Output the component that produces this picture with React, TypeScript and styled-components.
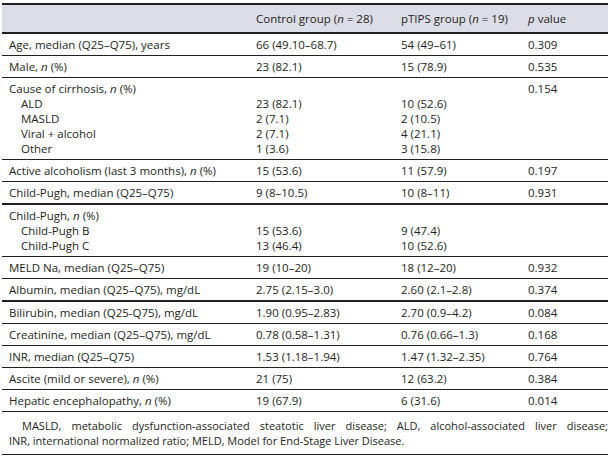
import React, { FC, ReactNode } from "react";
import styled, { createGlobalStyle } from "styled-components";

const GlobalStyle = createGlobalStyle`
  body {
    margin: 0;
    background: #ffffff;
    color: #231f20;
    font-family: "Open Sans", "Liberation Sans", sans-serif;
  }
`;

type Line = [ReactNode, string, string];

type Row = {
  label: ReactNode;
  control: string;
  ptips: string;
  p: string;
  sub?: Line[];
  thick?: boolean;
};

const N = () => <I>n</I>;

const rows: Row[] = [
  { label: "Age, median (Q25–Q75), years", control: "66 (49.10–68.7)", ptips: "54 (49–61)", p: "0.309" },
  { label: <>Male, <N /> (%)</>, control: "23 (82.1)", ptips: "15 (78.9)", p: "0.535" },
  {
    label: <>Cause of cirrhosis, <N /> (%)</>,
    control: "",
    ptips: "",
    p: "0.154",
    sub: [
      ["ALD", "23 (82.1)", "10 (52.6)"],
      ["MASLD", "2 (7.1)", "2 (10.5)"],
      ["Viral + alcohol", "2 (7.1)", "4 (21.1)"],
      ["Other", "1 (3.6)", "3 (15.8)"],
    ],
  },
  { label: <>Active alcoholism (last 3 months), <N /> (%)</>, control: "15 (53.6)", ptips: "11 (57.9)", p: "0.197" },
  { label: "Child-Pugh, median (Q25–Q75)", control: "9 (8–10.5)", ptips: "10 (8–11)", p: "0.931", thick: true },
  {
    label: <>Child-Pugh, <N /> (%)</>,
    control: "",
    ptips: "",
    p: "",
    sub: [
      ["Child-Pugh B", "15 (53.6)", "9 (47.4)"],
      ["Child-Pugh C", "13 (46.4)", "10 (52.6)"],
    ],
  },
  { label: "MELD Na, median (Q25–Q75)", control: "19 (10–20)", ptips: "18 (12–20)", p: "0.932" },
  { label: "Albumin, median (Q25–Q75), mg/dL", control: "2.75 (2.15–3.0)", ptips: "2.60 (2.1–2.8)", p: "0.374", thick: true },
  { label: "Bilirubin, median (Q25-Q75), mg/dL", control: "1.90 (0.95–2.83)", ptips: "2.70 (0.9–4.2)", p: "0.084" },
  { label: "Creatinine, median (Q25–Q75), mg/dL", control: "0.78 (0.58–1.31)", ptips: "0.76 (0.66–1.3)", p: "0.168" },
  { label: "INR, median (Q25–Q75)", control: "1.53 (1.18–1.94)", ptips: "1.47 (1.32–2.35)", p: "0.764" },
  { label: <>Ascite (mild or severe), <N /> (%)</>, control: "21 (75)", ptips: "12 (63.2)", p: "0.384" },
  { label: <>Hepatic encephalopathy, <N /> (%)</>, control: "19 (67.9)", ptips: "6 (31.6)", p: "0.014" },
];

const App: FC = () => (
  <>
    <GlobalStyle />
    <Page>
      <Table>
        <colgroup>
          <col style={{ width: 247 }} />
          <col style={{ width: 145 }} />
          <col style={{ width: 127 }} />
          <col />
        </colgroup>
        <thead>
          <tr>
            <HeadCell />
            <HeadCell>
              Control group (<I>n</I> = 28)
            </HeadCell>
            <HeadCell>
              pTIPS group (<I>n</I> = 19)
            </HeadCell>
            <HeadCell>
              <I>p</I> value
            </HeadCell>
          </tr>
        </thead>
        <tbody>
          {rows.map((row, i) => (
            <BodyRow key={i} $thick={row.thick}>
              <Cell>
                {row.label}
                {row.sub?.map(([label], j) => (
                  <SubLabel key={j}>{label}</SubLabel>
                ))}
              </Cell>
              <Cell>
                {row.sub ? (
                  <SubColumn>
                    {row.sub.map(([, c], j) => (
                      <div key={j}>{c}</div>
                    ))}
                  </SubColumn>
                ) : (
                  row.control
                )}
              </Cell>
              <Cell>
                {row.sub ? (
                  <SubColumn>
                    {row.sub.map(([, , t], j) => (
                      <div key={j}>{t}</div>
                    ))}
                  </SubColumn>
                ) : (
                  row.ptips
                )}
              </Cell>
              <Cell>{row.p}</Cell>
            </BodyRow>
          ))}
        </tbody>
      </Table>
      <Notes>
        <NoteLine $first>
          MASLD, metabolic dysfunction-associated steatotic liver disease; ALD, alcohol-associated liver disease;
        </NoteLine>
        <NoteLine>INR, international normalized ratio; MELD, Model for End-Stage Liver Disease.</NoteLine>
      </Notes>
    </Page>
  </>
);

export default App;

const Page = styled.div`
  width: 606px;
  padding: 3px 6px 0 2px;
  font-size: 11.5px;
`;

const Table = styled.table`
  width: 100%;
  table-layout: fixed;
  border-collapse: collapse;
  border-top: 2px solid #231f20;
`;

const HeadCell = styled.th`
  height: 27px;
  padding: 0 0 0 7px;
  background: #dcdde6;
  border-bottom: 2px solid #231f20;
  font-weight: normal;
  text-align: left;
  white-space: nowrap;
`;

const BodyRow = styled.tr<{ $thick?: boolean }>`
  border-bottom: ${(p) => (p.$thick ? 2 : 1)}px solid #231f20;
`;

const Cell = styled.td`
  padding: 3px 0 3px 7px;
  line-height: 15px;
  vertical-align: top;
  white-space: nowrap;
`;

const SubLabel = styled.div`
  padding-left: 12px;
`;

const SubColumn = styled.div`
  padding-top: 15px;
`;

const I = styled.i`
  font-style: italic;
`;

const Notes = styled.div`
  padding: 6px 0 6px 7px;
  border-bottom: 1px solid #231f20;
  font-size: 11px;
  line-height: 15px;
`;

const NoteLine = styled.div<{ $first?: boolean }>`
  text-indent: ${(p) => (p.$first ? "13px" : "0")};
  text-align: ${(p) => (p.$first ? "justify" : "left")};
  text-align-last: ${(p) => (p.$first ? "justify" : "left")};
  white-space: nowrap;
`;
